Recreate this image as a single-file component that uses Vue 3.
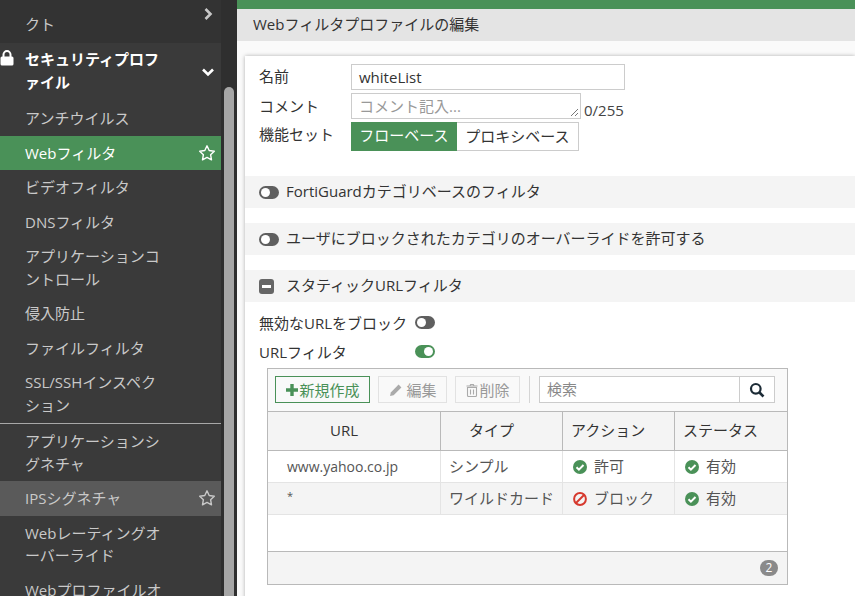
<script setup>
const menuTop = [
  { text: 'アンチウイルス' },
  { text: 'Webフィルタ', active: true, star: true },
  { text: 'ビデオフィルタ' },
  { text: 'DNSフィルタ' },
  { text: 'アプリケーションコントロール', two: true },
  { text: '侵入防止' },
  { text: 'ファイルフィルタ' },
  { text: 'SSL/SSHインスペクション', two: true }
]
const menuBottom = [
  { text: 'アプリケーションシグネチャ', two: true },
  { text: 'IPSシグネチャ', hover: true, star: true },
  { text: 'Webレーティングオーバーライド', two: true },
  { text: 'Webプロファイルオーバーライド', two: true }
]
const rows = [
  { url: 'www.yahoo.co.jp', type: 'シンプル', action: '許可', allow: true, status: '有効' },
  { url: '*', type: 'ワイルドカード', action: 'ブロック', allow: false, status: '有効' }
]
</script>

<template>
  <div class="page">
    <aside class="side">
      <div class="side-inner">
        <div class="crumb">
          <span class="crumb-text">クト</span>
          <svg class="chev-r" viewBox="0 0 10 14"><path d="M2.5 2l5 5-5 5" fill="none" stroke="#c8c8c8" stroke-width="2.6"/></svg>
        </div>
        <div class="group">
          <svg class="lock" viewBox="0 0 14 16"><path d="M3.5 7V4.6a3.5 3.5 0 0 1 7 0V7" fill="none" stroke="#fff" stroke-width="2"/><rect x="0.5" y="6.5" width="13" height="9" rx="1.5" fill="#fff"/></svg>
          <span class="group-text">セキュリティプロファイル</span>
          <svg class="chev-d" viewBox="0 0 14 10"><path d="M2 2.5l5 5 5-5" fill="none" stroke="#fff" stroke-width="2.6"/></svg>
        </div>
        <div v-for="m in menuTop" :key="m.text" class="item" :class="{ active: m.active, hover: m.hover }">
          <span class="item-text">{{ m.text }}</span>
          <svg v-if="m.star" class="star" viewBox="0 0 18 18"><path d="M9 1.8l2.2 4.7 5.1.7-3.7 3.5.9 5.1L9 13.4l-4.5 2.4.9-5.1-3.7-3.5 5.1-.7z" fill="none" stroke="currentColor" stroke-width="1.4" stroke-linejoin="round"/></svg>
        </div>
        <div class="divider"></div>
        <div v-for="m in menuBottom" :key="m.text" class="item" :class="{ active: m.active, hover: m.hover }">
          <span class="item-text">{{ m.text }}</span>
          <svg v-if="m.star" class="star" viewBox="0 0 18 18"><path d="M9 1.8l2.2 4.7 5.1.7-3.7 3.5.9 5.1L9 13.4l-4.5 2.4.9-5.1-3.7-3.5 5.1-.7z" fill="none" stroke="currentColor" stroke-width="1.4" stroke-linejoin="round"/></svg>
        </div>
      </div>
      <div class="track"><div class="thumb"></div></div>
    </aside>

    <main class="main">
      <div class="topbar"></div>
      <h1 class="title">Webフィルタプロファイルの編集</h1>
      <section class="card">
        <div class="form">
          <div class="form-row">
            <label class="lbl">名前</label>
            <div class="name-input">whiteList</div>
          </div>
          <div class="form-row comment-row">
            <label class="lbl">コメント</label>
            <div class="comment-input">
              <span>コメント記入...</span>
              <svg class="grip" viewBox="0 0 9 9"><path d="M1 8l7-7M5 8l3-3" stroke="#777" stroke-width="1" fill="none"/></svg>
            </div>
            <span class="count">0/255</span>
          </div>
          <div class="form-row">
            <label class="lbl">機能セット</label>
            <div class="seg">
              <span class="seg-on">フローベース</span>
              <span class="seg-off">プロキシベース</span>
            </div>
          </div>
        </div>

        <div class="bar bar-first"><span class="toggle"></span><span class="bar-text">FortiGuardカテゴリベースのフィルタ</span></div>
        <div class="bar"><span class="toggle"></span><span class="bar-text">ユーザにブロックされたカテゴリのオーバーライドを許可する</span></div>
        <div class="bar">
          <svg class="minus" viewBox="0 0 15 15"><rect width="15" height="15" rx="3" fill="#666"/><rect x="3" y="6" width="9" height="3" fill="#fff"/></svg>
          <span class="bar-text">スタティックURLフィルタ</span>
        </div>

        <div class="opt-row first"><span class="opt-lbl">無効なURLをブロック</span><span class="toggle"></span></div>
        <div class="opt-row"><span class="opt-lbl">URLフィルタ</span><span class="toggle on"></span></div>

        <div class="table">
          <div class="toolbar">
            <button class="btn create">
              <svg class="ic" viewBox="0 0 14 14"><path d="M7 1v12M1 7h12" stroke="#4a9158" stroke-width="3.4"/></svg>新規作成
            </button>
            <button class="btn off">
              <svg class="ic" viewBox="0 0 14 14"><path d="M1 13l.8-3.6L9.6 1.6l2.8 2.8-7.8 7.8z" fill="#aaa"/></svg>&nbsp;編集
            </button>
            <button class="btn off del">
              <svg class="ic" viewBox="0 0 14 14"><path d="M2.5 4.5h9v8a1 1 0 0 1-1 1h-7a1 1 0 0 1-1-1zM1.5 3h11M5 3l.6-1.5h2.8L9 3M5.5 6.5v5M8.5 6.5v5" fill="none" stroke="#aaa" stroke-width="1.1"/></svg>削除
            </button>
            <span class="sep"></span>
            <div class="search">
              <span class="search-text">検索</span>
              <span class="search-btn">
                <svg viewBox="0 0 16 16" width="16" height="16"><circle cx="6.8" cy="6.8" r="4.8" fill="none" stroke="#1c2b36" stroke-width="2.2"/><path d="M10.5 10.5l4 4" stroke="#1c2b36" stroke-width="2.6"/></svg>
              </span>
            </div>
          </div>
          <div class="grid head">
            <div class="c center">URL</div>
            <div class="c center">タイプ</div>
            <div class="c">アクション</div>
            <div class="c last">ステータス</div>
          </div>
          <div v-for="(r, i) in rows" :key="r.url" class="grid row" :class="{ alt: i === 1 }">
            <div class="c url" :class="{ star: r.url === '*' }">{{ r.url }}</div>
            <div class="c">{{ r.type }}</div>
            <div class="c">
              <svg v-if="r.allow" class="state" viewBox="0 0 14 14"><circle cx="7" cy="7" r="7" fill="#4a9158"/><path d="M3.5 7.2l2.4 2.4 4.6-4.6" fill="none" stroke="#fff" stroke-width="2"/></svg>
              <svg v-else class="state" viewBox="0 0 14 14"><circle cx="7" cy="7" r="5.9" fill="none" stroke="#d6392e" stroke-width="2"/><path d="M3 11L11 3" stroke="#d6392e" stroke-width="2"/></svg>
              {{ r.action }}
            </div>
            <div class="c last">
              <svg class="state" viewBox="0 0 14 14"><circle cx="7" cy="7" r="7" fill="#4a9158"/><path d="M3.5 7.2l2.4 2.4 4.6-4.6" fill="none" stroke="#fff" stroke-width="2"/></svg>
              {{ r.status }}
            </div>
          </div>
          <div class="blank"></div>
          <div class="foot"><span class="badge">2</span></div>
        </div>
      </section>
    </main>
  </div>
</template>

<style>
html, body { margin: 0; overflow: hidden; }
</style>

<style scoped>
.page {
  display: flex;
  width: 855px;
  height: 596px;
  overflow: hidden;
  font-family: "Open Sans", "Noto Sans CJK JP", sans-serif;
  font-size: 15px;
  color: #333;
  background: #fafafa;
}
.side {
  width: 237px;
  flex: none;
  display: flex;
  background: #2f2f2f;
  height: 596px;
  overflow: hidden;
}
.side-inner { width: 221px; flex: none; background: #3a3a3a; color: #c9c9c9; }
.track { width: 16px; position: relative; }
.thumb { position: absolute; left: 3px; width: 10px; top: 87px; bottom: 0; background: #a6a6a6; border-radius: 5px 5px 0 0; }
.crumb { height: 43px; background: #333; display: flex; align-items: flex-start; padding-left: 25px; position: relative; }
.crumb-text { line-height: 24px; margin-top: 12px; }
.chev-r { position: absolute; left: 203px; top: 7px; width: 10px; height: 14px; }
.group { height: 58px; position: relative; padding-left: 25px; color: #fff; font-weight: 700; }
.group-text { display: block; width: 145px; line-height: 22.5px; padding-top: 5px; word-break: break-all; }
.lock { position: absolute; left: 0; top: 7px; width: 14px; height: 16px; }
.chev-d { position: absolute; left: 201px; top: 24px; width: 14px; height: 10px; }
.item { display: flex; align-items: center; justify-content: space-between; padding: 6px 5px 6px 25px; line-height: 22.5px; }
.item-text { width: 145px; word-break: break-all; }
.item.active { background: #4a9158; color: #fff; }
.item.hover { background: #5a5a5a; }
.star { width: 18px; height: 18px; flex: none; }
.divider { height: 1px; background: #a8a8a8; margin-top: 1px; }

.main { flex: 1; min-width: 0; }
.topbar { height: 9px; background: #4a9158; }
.title { margin: 0; height: 32px; line-height: 30px; background: #e4e4e4; padding-left: 16px; font-size: 15px; font-weight: 400; color: #333; }
.card { margin: 15px 0 0 8px; background: #fff; box-shadow: 0 0 4px rgba(0,0,0,.3); height: 560px; }
.form { padding: 8px 0 0 14px; }
.form-row { display: flex; align-items: flex-start; margin-bottom: 3px; }
.lbl { width: 92px; flex: none; line-height: 24px; }
.comment-row .lbl { padding-top: 1px; }
.name-input { height: 24px; border: 1px solid #ccc; padding-left: 7px; width: 265px; line-height: 24px; }
.comment-input { position: relative; width: 221px; height: 24px; border: 1px solid #ccc; padding-left: 7px; line-height: 24px; color: #999; }
.grip { position: absolute; right: 1px; bottom: 1px; width: 9px; height: 9px; }
.count { margin: 8px 0 0 3px; line-height: 18px; color: #444; }
.seg { display: flex; height: 29px; line-height: 27px; }
.seg-on { background: #4a9158; color: #fff; width: 106px; text-align: center; }
.seg-off { border: 1px solid #ccc; border-left: 0; width: 122px; box-sizing: border-box; text-align: center; }
.bar { display: flex; align-items: center; height: 32px; margin-top: 15px; background: #f4f4f4; padding-left: 14px; gap: 7px; }
.bar-first { margin-top: 25px; }
.bar-text { line-height: 24px; padding-bottom: 3px; }
.toggle { display: inline-block; position: relative; width: 20px; height: 13px; border-radius: 7px; background: #5f5f5f; flex: none; }
.toggle::after { content: ""; position: absolute; left: 2px; top: 2px; width: 9px; height: 9px; border-radius: 50%; background: #fff; }
.toggle.on { background: #4a9158; }
.toggle.on::after { left: 9px; }
.minus { width: 15px; height: 15px; flex: none; margin-right: 5px; }
.opt-row { display: flex; align-items: center; height: 24px; margin: 0 0 5px 14px; }
.opt-row.first { margin-top: 8px; }
.opt-lbl { width: 156px; }
.table { margin-left: 22px; width: 519px; border: 1px solid #b9b9b9; border-bottom-width: 2px; height: 214px; }
.toolbar { height: 43px; background: #f9f9f9; display: flex; align-items: center; padding: 0 12px 1px 7px; border-bottom: 1px solid #b9b9b9; box-sizing: border-box; }
.btn { font: inherit; height: 27px; padding: 0; background: transparent; border: 1px solid #e2e2e2; color: #999; display: inline-flex; align-items: center; justify-content: center; margin-right: 8px; }
.btn.create { border-color: #4a9158; color: #4a9158; width: 95px; }
.btn.off { width: 69px; }
.btn.del { width: 65px; }
.ic { width: 14px; height: 14px; flex: none; }
.sep { width: 1px; height: 27px; background: #d5d5d5; margin: 0 9px 0 1px; }
.search { display: flex; width: 236px; height: 27px; border: 1px solid #ccc; background: #fff; box-sizing: border-box; }
.search-text { flex: 1; padding-left: 7px; line-height: 25px; color: #888; }
.search-btn { width: 34px; border-left: 1px solid #ccc; display: flex; align-items: center; justify-content: center; }
.grid { display: grid; grid-template-columns: 173px 122px 112px 112px; }
.head { height: 39px; background: #f4f4f4; border-bottom: 1px solid #b9b9b9; box-sizing: border-box; }
.head .c { border-right: 1px solid #b9b9b9; line-height: 36px; }
.c { padding-left: 8px; white-space: nowrap; box-sizing: border-box; }
.c.center { padding-left: 0; padding-right: 20px; text-align: center; }
.c.last { border-right: 0 !important; }
.row { height: 32px; border-bottom: 1px solid #e4e4e4; box-sizing: border-box; color: #555; }
.row .c { border-right: 1px solid #e4e4e4; line-height: 31px; }
.row .c.url { padding-left: 19px; font-size: 14px; }
.row .c.url.star { font-size: 11px; line-height: 25px; width: auto; height: auto; }
.row.alt { background: #f4f4f4; }
.state { width: 14px; height: 14px; vertical-align: -2px; margin-right: 3px; margin-left: 2px; }
.blank { height: 36px; border-bottom: 1px solid #b9b9b9; }
.foot { height: 32px; background: #f4f4f4; display: flex; align-items: center; justify-content: flex-end; padding-right: 9px; }
.badge { width: 18px; height: 16px; border-radius: 8px; background: #8a8a8a; color: #fff; font-size: 12px; line-height: 16px; text-align: center; }
</style>
